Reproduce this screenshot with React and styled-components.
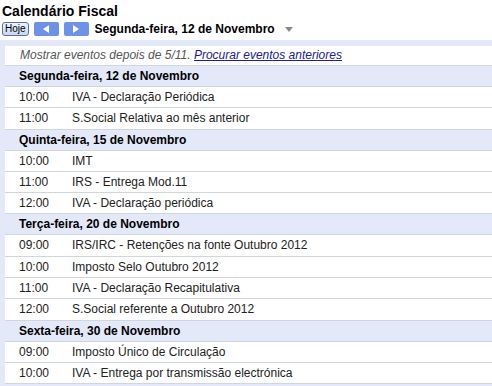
import React from 'react';
import styled, { createGlobalStyle } from 'styled-components';

const GlobalStyle = createGlobalStyle`
  html, body {
    margin: 0;
    padding: 0;
    background: #fff;
    overflow: hidden;
  }
  body {
    font-family: Arial, 'Liberation Sans', sans-serif;
    color: #000;
  }
`;

const Page = styled.div`
  width: 492px;
  height: 386px;
  overflow: hidden;
  display: flex;
  flex-direction: column;
`;

const Title = styled.div`
  font-size: 14px;
  font-weight: 700;
  padding: 3px 0 0 2px;
  height: 18px;
  line-height: 16px;
`;

const NavBar = styled.div`
  display: flex;
  align-items: center;
  height: 16px;
  padding: 0 0 0 2px;
`;

const TodayButton = styled.button`
  height: 14px;
  padding: 0 2px;
  margin: 0 5px 0 0;
  font-family: Arial, 'Liberation Sans', sans-serif;
  font-size: 10px;
  line-height: 12px;
  color: #000;
  border: 1px solid #5a72a0;
  border-radius: 3px;
  background: linear-gradient(#eef3fc, #c9d6f0);
`;

const ArrowButton = styled.button`
  width: 25px;
  height: 14px;
  margin: 0 5px 0 0;
  padding: 0;
  border: none;
  border-radius: 2px;
  background: #6d92e8;
  display: flex;
  align-items: center;
  justify-content: center;
`;

const DateLabel = styled.div`
  margin-left: 1px;
  font-size: 12px;
  font-weight: 700;
  display: flex;
  align-items: center;
`;

const DropArrow = styled.span`
  display: inline-block;
  margin-left: 10px;
  width: 0;
  height: 0;
  border-left: 4px solid transparent;
  border-right: 4px solid transparent;
  border-top: 5px solid #888;
`;

const Agenda = styled.div`
  margin-top: 3px;
  background: #e3e9f8;
  padding: 6px 0 0 5px;
  flex: 1;
`;

const Notice = styled.div`
  background: #fff;
  height: 19px;
  line-height: 19px;
  padding-left: 15px;
  font-size: 12px;
  font-style: italic;
  color: #555;
  border-bottom: 1px solid #d0d7e0;

  a {
    color: #20209a;
    text-decoration: underline;
  }
`;

const DayHeader = styled.div`
  height: 20px;
  line-height: 20px;
  padding-left: 14px;
  font-size: 12px;
  font-weight: 700;
  background: #e3e9f8;
  border-bottom: 1px solid #cfd6de;
`;

const EventRow = styled.div`
  display: flex;
  height: 20.3px;
  line-height: 20px;
  padding-left: 14px;
  font-size: 12px;
  color: #222;
  background: #fff;
  border-bottom: 1px solid #cfd6de;
`;

const Time = styled.span`
  width: 53px;
  flex-shrink: 0;
`;

const days = [
  {
    label: 'Segunda-feira, 12 de Novembro',
    events: [
      ['10:00', 'IVA - Declaração Periódica'],
      ['11:00', 'S.Social Relativa ao mês anterior'],
    ],
  },
  {
    label: 'Quinta-feira, 15 de Novembro',
    events: [
      ['10:00', 'IMT'],
      ['11:00', 'IRS - Entrega Mod.11'],
      ['12:00', 'IVA - Declaração periódica'],
    ],
  },
  {
    label: 'Terça-feira, 20 de Novembro',
    events: [
      ['09:00', 'IRS/IRC - Retenções na fonte Outubro 2012'],
      ['10:00', 'Imposto Selo Outubro 2012'],
      ['11:00', 'IVA - Declaração Recapitulativa'],
      ['12:00', 'S.Social referente a Outubro 2012'],
    ],
  },
  {
    label: 'Sexta-feira, 30 de Novembro',
    events: [
      ['09:00', 'Imposto Único de Circulação'],
      ['10:00', 'IVA - Entrega por transmissão electrónica'],
    ],
  },
];

const Triangle = ({ dir }) => (
  <svg width="6" height="8" viewBox="0 0 6 8">
    {dir === 'left' ? (
      <path d="M6 0 L0 4 L6 8 Z" fill="#fff" />
    ) : (
      <path d="M0 0 L6 4 L0 8 Z" fill="#fff" />
    )}
  </svg>
);

export default function App() {
  return (
    <Page>
      <GlobalStyle />
      <Title>Calendário Fiscal</Title>
      <NavBar>
        <TodayButton>Hoje</TodayButton>
        <ArrowButton>
          <Triangle dir="left" />
        </ArrowButton>
        <ArrowButton>
          <Triangle dir="right" />
        </ArrowButton>
        <DateLabel>
          Segunda-feira, 12 de Novembro
          <DropArrow />
        </DateLabel>
      </NavBar>
      <Agenda>
        <Notice>
          Mostrar eventos depois de 5/11. <a href="#">Procurar eventos anteriores</a>
        </Notice>
        {days.map(day => (
          <React.Fragment key={day.label}>
            <DayHeader>{day.label}</DayHeader>
            {day.events.map(([time, title]) => (
              <EventRow key={time + title}>
                <Time>{time}</Time>
                <span>{title}</span>
              </EventRow>
            ))}
          </React.Fragment>
        ))}
      </Agenda>
    </Page>
  );
}
